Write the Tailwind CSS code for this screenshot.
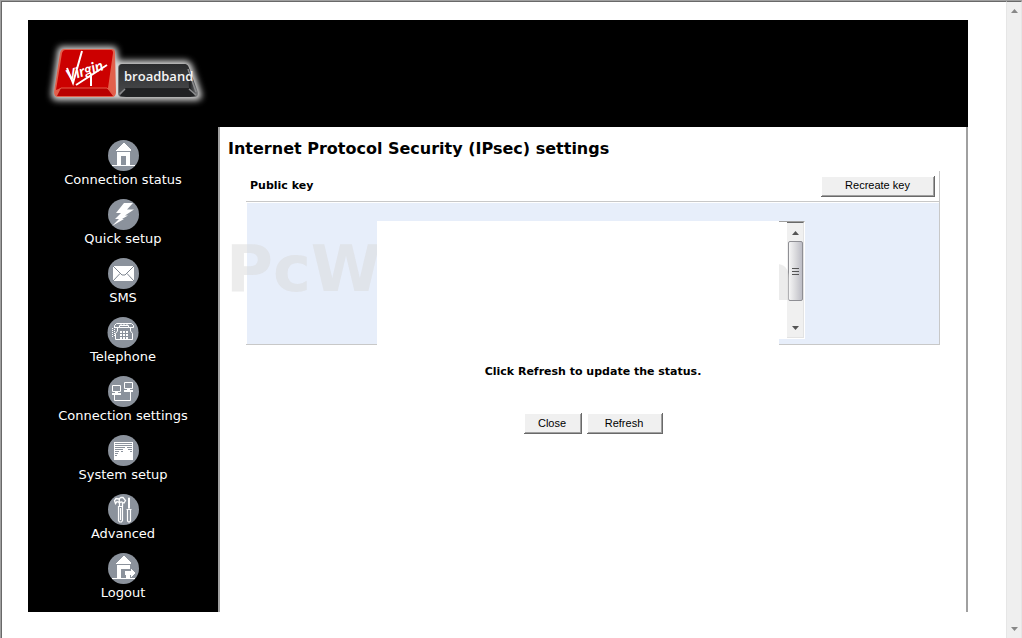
<!DOCTYPE html>
<html lang="en">
<head>
    <meta charset="UTF-8">
    <meta name="viewport" content="width=device-width, initial-scale=1.0">
    <title>IPsec settings</title>
    <script src="https://cdn.jsdelivr.net/npm/@tailwindcss/browser@4"></script>
</head>
<body class="flex min-h-screen bg-white font-['Verdana','DejaVu_Sans',sans-serif] text-black">
    <div class="flex flex-1 border-t border-l border-[#a0a0a0]">
        <div class="flex-1 border-t border-l border-[#696969] pt-[18px] pb-6 pl-[26px] pr-[38px]">
            <header class="h-[107px] bg-black">
                <!-- logo -->
                <svg class="block" width="200" height="107" viewBox="0 0 200 107" role="img" aria-label="Virgin broadband">
                    <defs>
                        <filter id="glow" x="-20%" y="-30%" width="140%" height="160%"><feGaussianBlur stdDeviation="3"/></filter>
                        <linearGradient id="dark" x1="0" y1="0" x2="0" y2="1">
                            <stop offset="0" stop-color="#2a2b2d"/><stop offset="1" stop-color="#48494b"/>
                        </linearGradient>
                        <linearGradient id="base" x1="0" y1="0" x2="1" y2="0">
                            <stop offset="0" stop-color="#77787a"/><stop offset=".1" stop-color="#222325"/><stop offset=".9" stop-color="#222325"/><stop offset="1" stop-color="#88898b"/>
                        </linearGradient>
                    </defs>
                    <path d="M34 28H84Q88 28 88 32L89 42H157Q161 42 163 47L172 74Q173 79 168 79H29Q24 79 25 73L31 32Q31 28 34 28Z" fill="#d8d8d8" stroke="#d8d8d8" stroke-width="3" filter="url(#glow)"/>
                    <path d="M36 29H84Q87 29 87 32L88 72Q88 77 84 77H30Q26 77 26 72L32 33Q33 29 36 29Z" fill="#e2604c"/>
                    <path d="M37 30H83Q85 30 85 33L80 68H33L28 70L34 33Q35 30 37 30Z" fill="#cc0000"/>
                    <path d="M33 68H79L85 76H29Z" fill="#b90000"/>
                    <path d="M28 72L33 68H79L86 74" fill="none" stroke="#e45a49" stroke-width="1"/>
                    <path d="M94 44H156Q160 44 161 48L170 72Q171 77 166 77H94Q90 77 90 73V48Q90 44 94 44Z" fill="url(#base)"/>
                    <path d="M95 44H156Q159 44 160 47L161 68H97L91 73V48Q91 44 95 44Z" fill="url(#dark)"/>
                    <path d="M96 69H161L167 76H92Z" fill="#202123"/>
                    <path d="M92 74L97 69M161 69L168 75M160 49L168 72" fill="none" stroke="#8b8c8e" stroke-width="1.5"/>
                    <text x="40" y="61" transform="rotate(-17 40 61)" font-family="Lato, sans-serif" font-style="italic" font-weight="700" font-size="15" fill="#fff">Virgin</text>
                    <path d="M39 48L45 63L54 31M48 65L79 45M63 54L63 66" fill="none" stroke="#fff" stroke-width="2"/>
                    <text x="96" y="61" font-family="'Open Sans', sans-serif" font-weight="600" font-size="13" fill="#f4f4f4">broadband</text>
                </svg>
            </header>

            <div class="flex">
                <nav class="flex w-[190px] shrink-0 flex-col gap-[10px] bg-black pt-[13px] pb-[10px] text-[13px] leading-[18px] text-white">
                    <a href="#" class="flex flex-col items-center">
                        <svg width="31" height="31" viewBox="0 0 31 31" fill="#fff" shape-rendering="crispEdges">
                            <circle cx="15.5" cy="15.5" r="15.5" fill="#8b929c" shape-rendering="auto"/>
                            <path d="M15 3h1l7 7v1H8v-1zM9 12h13v13H18V16h-5v9H9zM4 25h23v1H4z"/>
                        </svg>
                        <span>Connection status</span>
                    </a>
                    <a href="#" class="flex flex-col items-center">
                        <svg width="31" height="31" viewBox="0 0 31 31" fill="#fff">
                            <circle cx="15.5" cy="15.5" r="15.5" fill="#8b929c"/>
                            <path d="M16 4H25L19 10.500H26L17 16.500H20L14 20H16L4 27L11 20H7L13 14H8Z"/>
                        </svg>
                        <span>Quick setup</span>
                    </a>
                    <a href="#" class="flex flex-col items-center">
                        <svg width="31" height="31" viewBox="0 0 31 31">
                            <circle cx="15.5" cy="15.5" r="15.5" fill="#8b929c"/>
                            <path d="M5 8h21v15H5z" fill="#fff"/>
                            <path d="M5 8L14 17H17L26 8M5 23L12 15.500M26 23L19 15.500" fill="none" stroke="#7c848f"/>
                        </svg>
                        <span>SMS</span>
                    </a>
                    <a href="#" class="flex flex-col items-center">
                        <svg width="32" height="31" viewBox="0 0 32 31" fill="none" stroke="#fff">
                            <circle cx="16" cy="15.500" r="15.500" fill="#8b929c" stroke="none"/>
                            <path d="M9.500 6.500H24.500L26.500 8.500V10.500H21.500V8.500H12.500V10.500H7.500V8.500ZM10.500 11V14L8.500 16.500V22.500H25.500V16.500L23.500 14V11M12.500 10.500H21.500M14 6.500V9M17 6.500V9M20 6.500V9"/>
                            <path d="M13 14h2v2h-2zM16 14h2v2h-2zM19 14h2v2h-2zM13 17h2v2h-2zM16 17h2v2h-2zM19 17h2v2h-2zM13 20h2v2h-2zM16 20h2v2h-2zM19 20h2v2h-2z" fill="#fff" stroke="none"/>
                            <path d="M7.500 10V20M5.500 11V20" stroke-dasharray="1 1"/>
                        </svg>
                        <span>Telephone</span>
                    </a>
                    <a href="#" class="flex flex-col items-center">
                        <svg width="31" height="31" viewBox="0 0 31 31" fill="none" stroke="#fff">
                            <circle cx="15.5" cy="15.5" r="15.5" fill="#8b929c" stroke="none"/>
                            <path d="M4.500 9.500h8v6h-8zM16.500 6.500h8v6h-8zM6.500 19V24.500H22.500V16"/>
                            <path d="M7 16h3v1h3v2H4v-2h3zM19 13h3v1h3v2h-9v-2h3z" fill="#fff" stroke="none"/>
                        </svg>
                        <span>Connection settings</span>
                    </a>
                    <a href="#" class="flex flex-col items-center">
                        <svg width="31" height="31" viewBox="0 0 31 31" shape-rendering="crispEdges">
                            <circle cx="15.5" cy="15.5" r="15.5" fill="#8b929c" shape-rendering="auto"/>
                            <path d="M6 7h19v18H6z" fill="#fff"/>
                            <path d="M7 8h17v1H7zM7 10h17v1H7zM7 12h10v1H7zM19 12h5v1h-5zM7 14h8v1H7zM20 14h4v1h-4zM7 16h4v1H7zM13 16h2v1h-2zM22 16h2v1h-2zM7 18h3v1H7zM7 20h2v1H7z" fill="#8b929c"/>
                        </svg>
                        <span>System setup</span>
                    </a>
                    <a href="#" class="flex flex-col items-center">
                        <svg width="31" height="31" viewBox="0 0 31 31" fill="none" stroke="#fff">
                            <circle cx="15.5" cy="15.5" r="15.5" fill="#8b929c" stroke="none"/>
                            <path d="M11.500 4.500L13 3.500H15L17.500 6.500L16 9L13.500 8L11 8.500ZM11 5L8 4.500L6.500 6.500L7.500 9.500L9 7.500L11 8.500M11.500 9V12M14.500 9V12" stroke-width="1.300"/>
                            <path d="M10.500 12.500h4v14l-1 1.500h-2l-1-1.500zM12.500 14v12M18.500 15.500h5M19.500 16v11l1 1h1l1-1V16M21 3.500V15" stroke-width="1.200"/>
                            <path d="M20 4h2v10h-2z" fill="#fff" stroke="none"/>
                        </svg>
                        <span>Advanced</span>
                    </a>
                    <a href="#" class="flex flex-col items-center">
                        <svg width="31" height="31" viewBox="0 0 31 31" fill="#fff" shape-rendering="crispEdges">
                            <circle cx="15.5" cy="15.5" r="15.5" fill="#8b929c" shape-rendering="auto"/>
                            <path d="M15 3h1l7 7v1H8v-1zM9 12h13v4h-9v9H9zM4 25h23v1H4zM18 22h4v3h-4z"/>
                            <path d="M17 18h6v-2l5 4-5 4v-2h-6z"/>
                        </svg>
                        <span>Logout</span>
                    </a>
                </nav>

                <main class="flex-1 border-x-2 border-[#a0a0a0] pt-[10px]">
                    <h1 class="pl-2 text-[16px] leading-6 font-bold">Internet Protocol Security (IPsec) settings</h1>

                    <section class="relative mx-[26px] mt-[10px] border-r border-b border-[#c8c8c8]">
                        <div class="flex h-[31px] items-center justify-between border-b border-[#c8c8c8] pr-1 pl-1 text-[11px]">
                            <label for="key" class="font-bold">Public key</label>
                            <button type="button" class="h-[21px] w-[114px] border-r border-b border-[#696969] bg-[#f0f0f0] font-['Liberation_Sans',sans-serif] shadow-[inset_1px_1px_#fff,inset_-1px_-1px_#a0a0a0]">Recreate key</button>
                        </div>
                        <div class="mt-px ml-px flex items-start bg-[#e7eefa] pt-[18px] pb-[5px] pl-[130px]">
                            <textarea id="key" readonly class="relative z-10 -mb-[7px] block h-[125px] w-[402px] resize-none overflow-hidden bg-white outline-none"></textarea>
                            <!-- scroll bar of the key box -->
                            <div class="relative flex h-[118px] w-[26px] justify-end overflow-hidden border-t border-r border-b border-t-[#a0a0a0] border-r-white border-b-white bg-white">
                                <div class="flex w-[17px] flex-col items-center border-t border-r border-b border-t-[#696969] border-r-[#e3e3e3] border-b-[#e3e3e3] bg-[#f0f0f0]">
                                    <svg class="mt-2 mb-[6px] block shrink-0" width="7" height="4" viewBox="0 0 7 4"><path d="M3.500 0L7 4H0Z" fill="#555"/></svg>
                                    <div class="flex h-[60px] w-[15px] shrink-0 flex-col items-center justify-center gap-[2px] rounded-[2px] border border-[#8f8f94] bg-linear-to-r from-[#f5f5f5] via-[#dadadd] to-[#bdbdc5]">
                                        <span class="h-px w-[7px] bg-[#555]"></span>
                                        <span class="h-px w-[7px] bg-[#555]"></span>
                                        <span class="h-px w-[7px] bg-[#555]"></span>
                                    </div>
                                    <svg class="mt-[25px] block shrink-0" width="7" height="4" viewBox="0 0 7 4"><path d="M0 0H7L3.500 4Z" fill="#555"/></svg>
                                </div>
                                <span class="absolute right-[10px] bottom-[28px] text-[64px] leading-[64px] font-bold text-[#dadada]/50" aria-hidden="true">m</span>
                            </div>
                        </div>
                        <span class="absolute top-[66px] -left-5 text-[64px] leading-[64px] font-bold text-[#dadada]/50" aria-hidden="true">PcW</span>
                    </section>

                    <p class="mt-[18px] text-center text-[11px] leading-[18px] font-bold">Click Refresh to update the status.</p>
                    <div class="mt-8 flex justify-center gap-[5px] font-['Liberation_Sans',sans-serif] text-[11px]">
                        <button type="button" class="h-[21px] w-[58px] border-r border-b border-[#696969] bg-[#f0f0f0] shadow-[inset_1px_1px_#fff,inset_-1px_-1px_#a0a0a0]">Close</button>
                        <button type="button" class="h-[21px] w-[76px] border-r border-b border-[#696969] bg-[#f0f0f0] shadow-[inset_1px_1px_#fff,inset_-1px_-1px_#a0a0a0]">Refresh</button>
                    </div>
                </main>
            </div>
        </div>

        <!-- page scroll bar -->
        <div class="flex w-4 flex-col items-center justify-between border-t border-x border-t-[#696969] border-x-[#e6e6e6] bg-[#efefef] py-[7px]" aria-hidden="true">
            <svg width="7" height="4" viewBox="0 0 7 4"><path d="M3.500 0L7 4H0Z" fill="#888"/></svg>
            <svg width="7" height="4" viewBox="0 0 7 4"><path d="M0 0H7L3.500 4Z" fill="#888"/></svg>
        </div>
    </div>
</body>
</html>
